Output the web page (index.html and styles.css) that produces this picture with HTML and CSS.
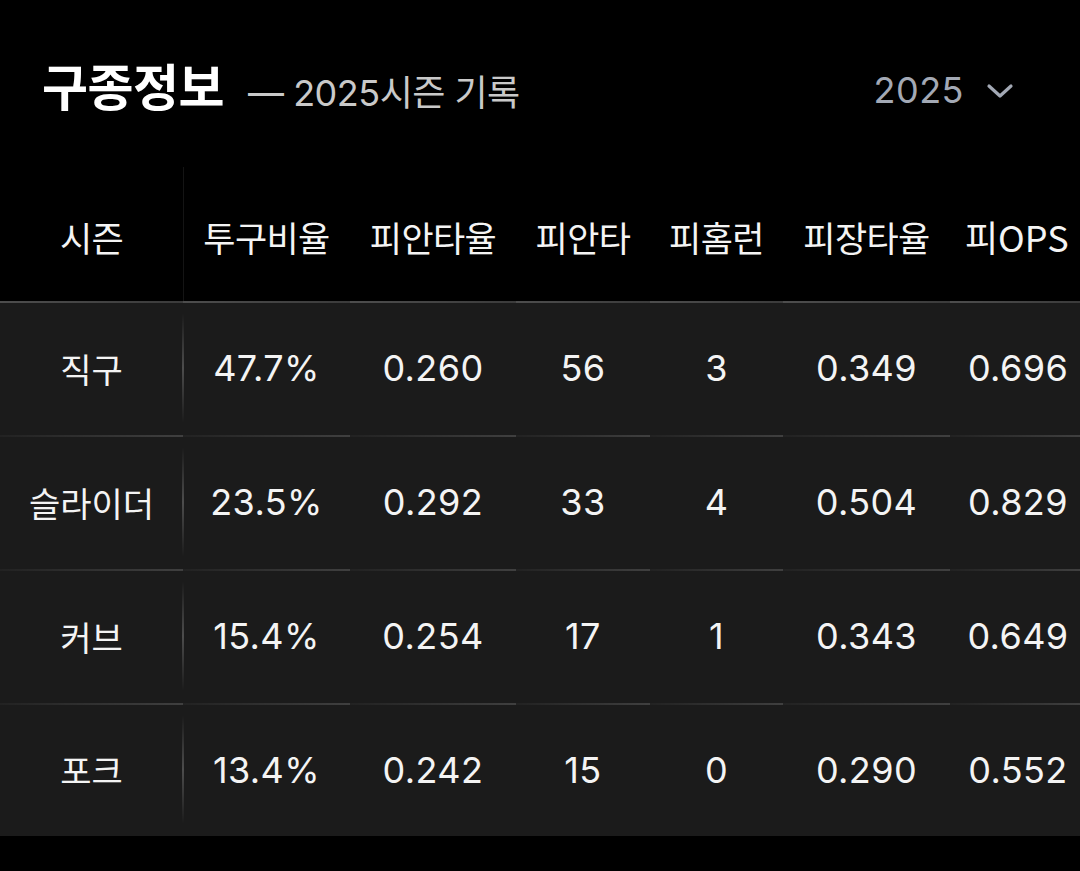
FILE: index.html
```html
<!DOCTYPE html>
<html lang="ko">
<head>
<meta charset="utf-8">
<title>구종정보</title>
<link rel="stylesheet" href="styles.css">
</head>
<body>
<div class="page">
  <header class="top">
    <div class="title-group">
      <h1 class="title">구종정보</h1>
      <span class="subtitle">— 2025시즌 기록</span>
    </div>
    <div class="year-select">
      <span class="year">2025</span>
      <svg class="chev" width="28" height="16" viewBox="0 0 28 16"><path d="M3 3 L14 13 L25 3" fill="none" stroke="#a3a9b5" stroke-width="3.2" stroke-linecap="round" stroke-linejoin="round"/></svg>
    </div>
  </header>

  <div class="table">
    <div class="row head">
      <div class="cell first">시즌</div>
      <div class="cell">투구비율</div>
      <div class="cell">피안타율</div>
      <div class="cell">피안타</div>
      <div class="cell">피홈런</div>
      <div class="cell">피장타율</div>
      <div class="cell">피OPS</div>
    </div>
    <div class="row body">
      <div class="cell first">직구</div>
      <div class="cell num">47.7%</div>
      <div class="cell num">0.260</div>
      <div class="cell num">56</div>
      <div class="cell num">3</div>
      <div class="cell num">0.349</div>
      <div class="cell num">0.696</div>
    </div>
    <div class="row body">
      <div class="cell first">슬라이더</div>
      <div class="cell num">23.5%</div>
      <div class="cell num">0.292</div>
      <div class="cell num">33</div>
      <div class="cell num">4</div>
      <div class="cell num">0.504</div>
      <div class="cell num">0.829</div>
    </div>
    <div class="row body">
      <div class="cell first">커브</div>
      <div class="cell num">15.4%</div>
      <div class="cell num">0.254</div>
      <div class="cell num">17</div>
      <div class="cell num">1</div>
      <div class="cell num">0.343</div>
      <div class="cell num">0.649</div>
    </div>
    <div class="row body last">
      <div class="cell first">포크</div>
      <div class="cell num">13.4%</div>
      <div class="cell num">0.242</div>
      <div class="cell num">15</div>
      <div class="cell num">0</div>
      <div class="cell num">0.290</div>
      <div class="cell num">0.552</div>
    </div>
  </div>
</div>
</body>
</html>
```

FILE: styles.css
```css
* { box-sizing: border-box; }
html, body {
  margin: 0;
  padding: 0;
  background: #000;
}
body {
  font-family: "Inter", "Noto Sans CJK KR", sans-serif;
  color: #f4f4f4;
  width: 1080px;
  height: 871px;
  overflow: hidden;
}
.page {
  display: flex;
  flex-direction: column;
}
.top {
  height: 167px;
  display: flex;
  align-items: flex-start;
  justify-content: space-between;
  padding: 60px 66px 0 42px;
}
.title-group {
  display: flex;
  align-items: baseline;
  gap: 24px;
  margin-top: -6px;
}
.title {
  margin: 0;
  font-family: "Noto Sans CJK KR", sans-serif;
  font-weight: 700;
  font-size: 50px;
  line-height: 60px;
  letter-spacing: -0.5px;
  color: #fff;
}
.subtitle {
  font-family: "Inter", "Noto Sans CJK KR", sans-serif;
  font-size: 36px;
  color: #c9c9c9;
  letter-spacing: -0.5px;
}
.year-select {
  display: flex;
  align-items: center;
  gap: 22px;
  height: 60px;
}
.year {
  font-size: 36px;
  color: #a3a9b5;
  letter-spacing: 0.5px;
}
.chev { display: block; margin-top: 2px; }

.table {
  display: flex;
  flex-direction: column;
}
.row {
  display: grid;
  grid-template-columns: 183px 167px 166px 134px 133px 167px 130px;
  height: 134px;
}
.row.head { background: #000; }
.row.body { background: #1b1b1b; }
.cell {
  display: flex;
  align-items: center;
  justify-content: center;
  font-size: 34px;
  font-family: "Noto Sans CJK KR", sans-serif;
  white-space: nowrap;
  position: relative;
}
.row.head .cell { padding-top: 4px; font-size: 35px; letter-spacing: -0.6px; }
.row.head .cell:last-child { justify-content: flex-start; padding-left: 15px; font-size: 36px; letter-spacing: 0; }
.cell.num {
  font-family: "Inter", "Noto Sans CJK KR", sans-serif;
  font-size: 36px;
  letter-spacing: 0.4px;
}
.row.body .cell:last-child { padding-left: 6px; }
.row.body .cell {
  background-image: linear-gradient(to right, rgba(255,255,255,0.03), rgba(255,255,255,0.16));
  background-repeat: no-repeat;
  background-size: 100% 2px;
  background-position: left top;
}
.row.body:nth-child(2) .cell {
  background-image: linear-gradient(to right, rgba(255,255,255,0.22), rgba(255,255,255,0.14));
}
.row.body .cell.first::after {
  content: "";
  position: absolute;
  right: -1px;
  top: 12px;
  bottom: 12px;
  width: 2px;
  background: linear-gradient(to bottom, rgba(255,255,255,0), rgba(255,255,255,0.22) 50%, rgba(255,255,255,0));
}
.row.head .cell.first::after {
  content: "";
  position: absolute;
  right: -1px;
  top: 0;
  bottom: 0;
  width: 1px;
  background: #141414;
}
.row.body.last { height: 133px; }
```
